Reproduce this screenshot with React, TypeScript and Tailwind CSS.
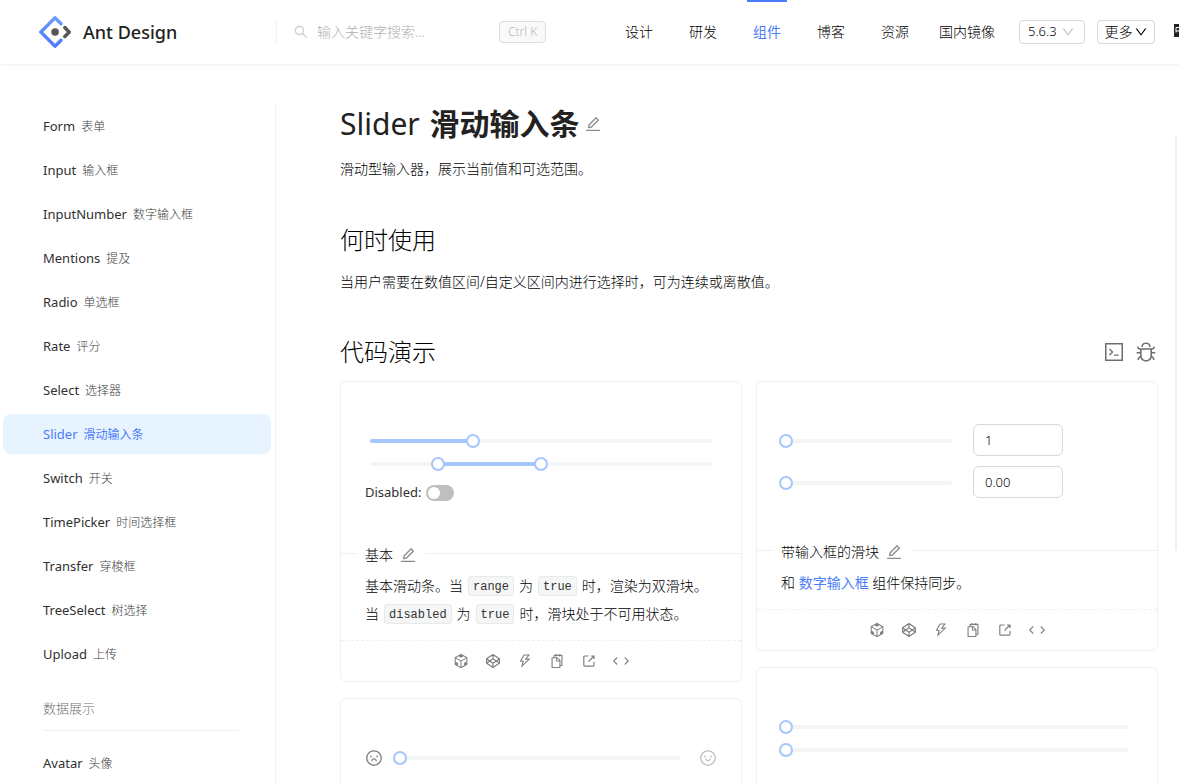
import { useState } from "react";
import type { ReactNode } from "react";
import {
  AiOutlineBug,
  AiOutlineCodepen,
  AiOutlineCodeSandbox,
  AiOutlineDown,
  AiOutlineEdit,
  AiOutlineFrown,
  AiOutlineSearch,
  AiOutlineSmile,
  AiOutlineSnippets,
  AiOutlineThunderbolt,
} from "react-icons/ai";

function Logo() {
  return (
    <svg className="size-8 shrink-0" viewBox="0 0 200 200" aria-hidden="true">
      <defs>
        <linearGradient id="logo-blue" x1="0.6" y1="0" x2="0.4" y2="1">
          <stop offset="0" stopColor="#6f9bff" />
          <stop offset="1" stopColor="#4a78fb" />
        </linearGradient>
      </defs>
      <path
        fill="url(#logo-blue)"
        d="M91.59 4.18 4.18 91.51a12 12 0 0 0 0 16.98l87.41 87.33a12 12 0 0 0 16.99 0l36.65-36.62a10.76 10.76 0 0 0-15.24-15.22L102.2 171.74a2.9 2.9 0 0 1-4.11 0L28.29 101.99a2.9 2.9 0 0 1 0-4.11l69.8-69.74a2.9 2.9 0 0 1 4.11 0l27.79 27.76a10.78 10.78 0 0 0 15.24-15.23L108.58 4.06a12.05 12.05 0 0 0-16.99.12Z"
      />
      <path
        fill="#5d5456"
        d="M153.69 135.85a10.78 10.78 0 0 0 15.24 0l27.03-27.01a12 12 0 0 0 0-16.97l-27.27-27.15a10.79 10.79 0 0 0-15.25 15.24l18.41 18.4a2.9 2.9 0 0 1 0 4.11l-18.16 18.16a10.77 10.77 0 0 0 0 15.22Z"
      />
      <circle fill="#5d5456" cx="100.5" cy="100.4" r="23.6" />
    </svg>
  );
}

const navItems = ["设计", "研发", "组件", "博客", "资源", "国内镜像"];

function Header() {
  return (
    <header className="relative z-10 flex h-16 items-center overflow-hidden bg-white">
      <a href="#home" className="flex w-[276px] shrink-0 items-center gap-3 pl-[39px]">
        <Logo />
        <span className="text-lg font-medium text-[#222]">Ant Design</span>
      </a>
      <div className="flex h-[22px] min-w-0 flex-1 items-center border-l border-[#f0f0f0] pl-4">
        <AiOutlineSearch className="size-4 shrink-0 text-[#cecece]" aria-hidden="true" />
        <input
          type="search"
          aria-label="搜索"
          placeholder="输入关键字搜索..."
          className="ml-2 w-[182px] bg-transparent text-sm font-light outline-none placeholder:text-[#b0b0b0]"
        />
        <kbd className="flex h-[22px] shrink-0 items-center rounded border border-[#dedede] bg-[#f9f9f9] px-2 font-[inherit] text-xs text-[#b8b8b8]">
          Ctrl K
        </kbd>
      </div>
      <nav className="flex h-16 shrink-0">
        {navItems.map((item) => (
          <a
            key={item}
            href={"#" + item}
            className={
              item === "组件"
                ? "flex w-16 flex-col items-center font-normal text-[#4b7dfa]"
                : item.length > 2
                  ? "flex w-20 flex-col items-center"
                  : "flex w-16 flex-col items-center"
            }
          >
            <span className={item === "组件" ? "h-0.5 w-10 bg-[#4b7dfa]" : "h-0.5 w-10"} />
            <span className="mt-[19px] text-sm leading-[22px]">{item}</span>
          </a>
        ))}
      </nav>
      <button
        type="button"
        aria-label="版本"
        className="ml-3 flex h-6 w-[66px] shrink-0 items-center justify-between rounded border border-[#d9d9d9] pr-[9px] pl-2 text-[13px]"
      >
        5.6.3
        <AiOutlineDown className="size-3.5 text-[#bfbfbf]" aria-hidden="true" />
      </button>
      <button
        type="button"
        className="ml-3 flex h-6 w-[58px] shrink-0 items-center justify-center rounded border border-[#d9d9d9] text-sm"
      >
        更多
        <AiOutlineDown className="ml-px size-3.5" aria-hidden="true" />
      </button>
      <button type="button" aria-label="切换语言" className="ml-[19px] h-6 w-[5px] shrink-0 overflow-hidden">
        <svg className="h-6 w-5" viewBox="0 0 20 24" aria-hidden="true">
          <rect x="0" y="4" width="15" height="13" fill="#222" />
          <path d="M2 12.5V7.5h6M2 11h6" fill="none" stroke="#fff" strokeWidth="1" />
        </svg>
      </button>
    </header>
  );
}

const menu: [string, string][] = [
  ["Form", "表单"],
  ["Input", "输入框"],
  ["InputNumber", "数字输入框"],
  ["Mentions", "提及"],
  ["Radio", "单选框"],
  ["Rate", "评分"],
  ["Select", "选择器"],
  ["Slider", "滑动输入条"],
  ["Switch", "开关"],
  ["TimePicker", "时间选择框"],
  ["Transfer", "穿梭框"],
  ["TreeSelect", "树选择"],
  ["Upload", "上传"],
];

function MenuItem({ name, label, active = false }: { name: string; label: string; active?: boolean }) {
  return (
    <a
      href={"#" + name}
      className={
        active
          ? "flex h-10 items-center gap-1.5 rounded-lg bg-[#e7f3fe] pt-0.5 pl-10 text-[13px] font-normal text-[#4b7dfa]"
          : "flex h-10 items-center gap-1.5 rounded-lg pt-0.5 pl-10 text-[13px] font-normal text-[#303030]"
      }
    >
      {name}
      <span className={active ? "text-xs" : "text-xs font-light text-[#404040]"}>{label}</span>
    </a>
  );
}

function Sidebar() {
  return (
    <aside className="mt-10 w-[276px] shrink-0 border-r border-[#f0f0f0] pt-0.5 pr-1 pl-[3px]">
      <nav className="flex flex-col gap-1">
        {menu.map(([name, label]) => (
          <MenuItem key={name} name={name} label={label} active={name === "Slider"} />
        ))}
        <div className="mt-5 mr-8 mb-2 ml-10 border-b border-[#f0f0f0] pb-3 text-[13px] leading-5 text-[#707070]">
          数据展示
        </div>
        <MenuItem name="Avatar" label="头像" />
      </nav>
    </aside>
  );
}

const thumb =
  "pointer-events-none absolute -inset-x-[7px] top-0 h-3 appearance-none bg-transparent [&::-webkit-slider-thumb]:pointer-events-auto [&::-webkit-slider-thumb]:size-3.5 [&::-webkit-slider-thumb]:appearance-none [&::-webkit-slider-thumb]:rounded-full [&::-webkit-slider-thumb]:border-2 [&::-webkit-slider-thumb]:border-[#a5c7fd] [&::-webkit-slider-thumb]:bg-white";

function Slider({ label, initial }: { label: string; initial: number[] }) {
  const [values, setValues] = useState(initial);
  const start = values.length > 1 ? Math.min(...values) : 0;
  const end = Math.max(...values);
  return (
    <div className="relative flex h-3 items-center">
      <div className="h-1 w-full overflow-hidden rounded-sm bg-[#f4f5f5]">
        <div className="h-1 bg-[#a5c7fd]" style={{ marginLeft: start + "%", width: end - start + "%" }} />
      </div>
      {values.map((value, index) => (
        <input
          key={index}
          type="range"
          aria-label={label}
          value={value}
          onChange={(e) => setValues(values.map((v, i) => (i === index ? Number(e.target.value) : v)))}
          className={thumb}
        />
      ))}
    </div>
  );
}

function Code({ children }: { children: string }) {
  return (
    <code className="h-5 rounded-[3px] border border-[#e8e9e9] bg-[#f5f6f6] px-1 font-['Liberation_Mono',monospace] text-xs leading-5 text-[#333]">
      {children}
    </code>
  );
}

function ExternalIcon() {
  return (
    <svg className="size-3.5 shrink-0" viewBox="0 0 14 14" fill="none" stroke="currentColor" strokeWidth="1.2" aria-hidden="true">
      <path d="M6.5 2H2.8a1 1 0 0 0-1 1v8.2a1 1 0 0 0 1 1H11a1 1 0 0 0 1-1V8M9 2h3v3M12 2 6.5 7.5" />
    </svg>
  );
}

function ExpandIcon() {
  return (
    <svg className="h-4 w-[18px] shrink-0" viewBox="0 0 18 16" fill="none" stroke="currentColor" strokeWidth="1.1" aria-hidden="true">
      <path d="M5.2 4.5 1.7 8l3.5 3.5M12.8 4.5 16.3 8l-3.5 3.5" />
    </svg>
  );
}

const actions: [string, ReactNode][] = [
  ["CodeSandbox", <AiOutlineCodeSandbox className="size-[18px] shrink-0" />],
  ["CodePen", <AiOutlineCodepen className="size-[18px] shrink-0" />],
  ["StackBlitz", <AiOutlineThunderbolt className="size-4" />],
  ["复制代码", <AiOutlineSnippets className="size-4" />],
  ["新窗口打开", <ExternalIcon />],
  ["显示代码", <ExpandIcon />],
];

function DemoCard({ demo, title, children }: { demo: ReactNode; title?: string; children?: ReactNode }) {
  return (
    <section className="rounded-md border border-[#f0f0f0]">
      <div className="px-6 pt-[42px] pb-[50px]">{demo}</div>
      {title && (
        <>
          <div className="flex h-px items-center bg-[#f0f0f0]">
            <h3 className="ml-4 flex items-center gap-1.5 bg-white px-2 pt-0.5 text-sm">
              {title}
              <a href={"#edit-" + title} aria-label={"编辑" + title}>
                <AiOutlineEdit className="size-[18px] text-[#8c8c8c]" />
              </a>
            </h3>
          </div>
          <div className="px-6 pt-[18px] pb-3 text-sm leading-7">{children}</div>
          <div className="flex h-[41px] items-center justify-center gap-4 border-t border-dashed border-[#f0f0f0] text-[#808080]">
            {actions.map(([name, icon]) => (
              <button key={name} type="button" aria-label={name} className="flex size-4 items-center justify-center">
                {icon}
              </button>
            ))}
          </div>
        </>
      )}
    </section>
  );
}

function NumberRow({ value, label }: { value: string; label: string }) {
  return (
    <div className="flex items-center">
      <div className="w-1/2 px-[5px] pt-0.5">
        <Slider label={label} initial={[0]} />
      </div>
      <input
        type="text"
        aria-label={label + "数值"}
        defaultValue={value}
        className="ml-4 h-8 w-[90px] rounded-md border border-[#d9d9d9] px-[11px] text-[13px] outline-none"
      />
    </div>
  );
}

function BasicDemo() {
  const [disabled, setDisabled] = useState(false);
  return (
    <div className="flex flex-col gap-[11px] pt-[11px]">
      <div className="flex flex-col gap-[11px] px-[5px]">
        <Slider label="单滑块" initial={[30]} />
        <Slider label="双滑块" initial={[20, 50]} />
      </div>
      <div className="flex h-[22px] items-center gap-1 pt-0.5 text-[13px] font-normal text-[#303030]">
        Disabled:
        <button
          type="button"
          role="switch"
          aria-label="Disabled"
          aria-checked={disabled}
          onClick={() => setDisabled(!disabled)}
          className="flex h-4 w-7 items-center rounded-full bg-[#bfbfbf] px-0.5"
        >
          <span className={disabled ? "ml-3 size-3 rounded-full bg-white" : "size-3 rounded-full bg-white"} />
        </button>
      </div>
    </div>
  );
}

export default function App() {
  return (
    <div className="h-screen overflow-hidden bg-white font-['Noto_Sans','Noto_Sans_CJK_SC',sans-serif] font-light text-black">
      <div className="shadow-[0_1px_2px_rgba(0,0,0,0.05),0_1px_6px_-1px_rgba(0,0,0,0.03)]">
        <Header />
      </div>
      <div className="flex">
        <Sidebar />
        <main className="min-w-0 flex-1 pt-10 pr-[17px] pl-16">
          <h1 className="flex h-[38px] items-center gap-1 text-[30px] font-normal text-[#222]">
            <span>
              Slider <span className="ml-0.5 font-bold">滑动输入条</span>
            </span>
            <a href="#edit-page" aria-label="编辑页面" className="pt-0.5">
              <AiOutlineEdit className="size-[18px] text-[#8c8c8c]" />
            </a>
          </h1>
          <p className="mt-4 text-sm leading-[22px]">滑动型输入器，展示当前值和可选范围。</p>
          <h2 className="mt-11 text-2xl leading-8">何时使用</h2>
          <p className="mt-[15px] text-sm leading-[22px]">当用户需要在数值区间/自定义区间内进行选择时，可为连续或离散值。</p>
          <div className="mt-[43px] flex items-center justify-between">
            <h2 className="text-2xl leading-8">代码演示</h2>
            <div className="flex items-center gap-2 text-[#6e6e6e]">
              <button type="button" aria-label="展开全部代码" className="flex size-6 items-center justify-center">
                <svg className="size-[18px]" viewBox="0 0 18 18" fill="none" stroke="currentColor" aria-hidden="true">
                  <rect x="0.75" y="0.75" width="16.5" height="16.5" strokeWidth="1.5" />
                  <path d="m4.5 6 3 3-3 3M9 12.2h4.5" strokeWidth="1.3" />
                </svg>
              </button>
              <button type="button" aria-label="调试" className="flex size-6 items-center justify-center">
                <AiOutlineBug className="size-[22px]" />
              </button>
            </div>
          </div>
          <div className="mt-[13px] grid grid-cols-2 items-start gap-[14px]">
            <div className="flex flex-col gap-4">
              <DemoCard title="基本" demo={<BasicDemo />}>
                <p className="flex items-center gap-[5px]">
                  <span>基本滑动条。当</span>
                  <Code>range</Code>
                  <span>为</span>
                  <Code>true</Code>
                  <span>时，渲染为双滑块。</span>
                </p>
                <p className="flex items-center gap-[5px]">
                  <span>当</span>
                  <Code>disabled</Code>
                  <span>为</span>
                  <Code>true</Code>
                  <span>时，滑块处于不可用状态。</span>
                </p>
              </DemoCard>
              <DemoCard
                demo={
                  <div className="flex h-[34px] items-center justify-between">
                    <AiOutlineFrown className="size-[18px] text-[#808080]" />
                    <div className="mr-[18px] ml-[17px] flex-1">
                      <Slider label="图标滑块" initial={[0]} />
                    </div>
                    <AiOutlineSmile className="size-[18px] text-[#bfbfbf]" />
                  </div>
                }
              />
            </div>
            <div className="flex flex-col gap-4">
              <DemoCard
                title="带输入框的滑块"
                demo={
                  <div className="flex flex-col gap-2.5 pb-0.5">
                    <NumberRow value="1" label="整数" />
                    <NumberRow value="0.00" label="小数" />
                  </div>
                }
              >
                和{" "}
                <a href="#input-number" className="font-normal text-[#4b7dfa]">
                  数字输入框
                </a>{" "}
                组件保持同步。
              </DemoCard>
              <DemoCard
                demo={
                  <div className="flex flex-col gap-[11px] px-[5px] pt-[11px]">
                    <Slider label="滑块一" initial={[0]} />
                    <Slider label="滑块二" initial={[0]} />
                  </div>
                }
              />
            </div>
          </div>
        </main>
        <div className="mt-[72px] h-[414px] w-1 shrink-0 border-l-2 border-[#f0f0f0]" />
      </div>
    </div>
  );
}
